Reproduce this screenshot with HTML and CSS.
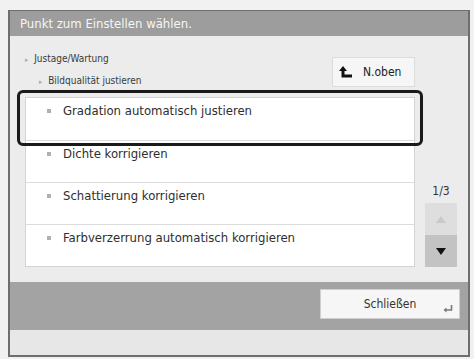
FILE: index.html
```html
<!DOCTYPE html>
<html>

<head>
  <meta charset="utf-8" />
  <title>Punkt zum Einstellen</title>
  <link rel="stylesheet" href="styles.css">
</head>

<body>
  <div class="frame">
    <div class="title">Punkt zum Einstellen wählen.</div>

    <div class="content">
      <div class="head">
        <div class="crumbs">
          <div class="crumb"><span class="tri">▸</span>Justage/Wartung</div>
          <div class="crumb sub"><span class="tri">▸</span>Bildqualität justieren</div>
        </div>
        <div class="btn up-btn">
          <svg width="14" height="13" viewBox="0 0 14 13">
            <path d="M4 0 L0 5 H2.5 V11.5 H13 V8.5 H5.5 V5 H8 Z" fill="#111" />
          </svg>
          <span>N.oben</span>
        </div>
      </div>

      <div class="main">
        <div class="list">
          <div class="row selected"><span class="dot"></span>Gradation automatisch justieren</div>
          <div class="row"><span class="dot"></span>Dichte korrigieren</div>
          <div class="row"><span class="dot"></span>Schattierung korrigieren</div>
          <div class="row"><span class="dot"></span>Farbverzerrung automatisch korrigieren</div>
        </div>
        <div class="side">
          <div class="page">1/3</div>
          <div class="scroll off">
            <svg width="10" height="7" viewBox="0 0 10 7"><path d="M5 0 L10 7 H0 Z" fill="#c9c9c9" /></svg>
          </div>
          <div class="scroll on">
            <svg width="10" height="7" viewBox="0 0 10 7"><path d="M0 0 H10 L5 7 Z" fill="#111" /></svg>
          </div>
        </div>
      </div>
    </div>

    <div class="foot">
      <div class="btn close-btn">
        <span>Schließen</span>
        <svg class="enter" width="10" height="8" viewBox="0 0 10 8">
          <path d="M8.5 0 V5 H3" stroke="#777" stroke-width="1.6" fill="none" />
          <path d="M0.5 5 L3.5 2.5 V7.5 Z" fill="#777" />
        </svg>
      </div>
    </div>

    <div class="strip"></div>
  </div>
</body>

</html>
```

FILE: styles.css
```css
html {
  width: 100%;
  height: 100%;
}

body {
  margin: 0;
  padding: 10px 4px 0 8px;
  background: #f1f1f1;
  font-family: "DejaVu Sans Condensed", "DejaVu Sans", sans-serif;
  font-stretch: condensed;
  color: #2a2a2a;
}

.frame {
  width: 458px;
  border: 2px solid #6e6e6e;
  border-top-width: 1px;
  display: flex;
  flex-direction: column;
}

.title {
  height: 25px;
  line-height: 25px;
  padding-left: 10px;
  background: #9d9d9d;
  color: #f6f6f6;
  font-size: 13px;
}

.content {
  background: #ececec;
  padding: 0 11px 15px 15px;
}

.head {
  height: 61px;
  display: flex;
  justify-content: space-between;
}

.crumbs {
  padding-top: 14px;
  font-size: 10px;
  color: #3a3a3a;
}

.crumb {
  height: 21px;
  line-height: 18px;
}

.crumb.sub {
  padding-left: 14px;
  padding-top: 1px;
}

.tri {
  color: #aaa;
  font-size: 7px;
  margin-right: 6px;
}

.btn {
  background: #f6f6f6;
  border: 1px solid #dcdcdc;
  box-sizing: border-box;
  display: flex;
  align-items: center;
}

.up-btn {
  margin-top: 21px;
  margin-right: 42px;
  width: 83px;
  height: 30px;
  padding-left: 6px;
  gap: 10px;
  font-size: 12px;
  color: #222;
}

.main {
  display: flex;
  gap: 10px;
}

.list {
  width: 390px;
  background: #fff;
  border: 1px solid #d4d4d4;
  box-sizing: border-box;
}

.row {
  position: relative;
  height: 42px;
  padding: 5px 0 0 20px;
  box-sizing: border-box;
  border-top: 1px solid #dcdcdc;
  font-size: 13px;
  line-height: 16px;
  color: #2e2e2e;
  display: flex;
  align-items: flex-start;
}

.row:first-child {
  border-top: none;
}

.row.selected {
  padding-top: 5px;
}

.row.selected::after {
  content: "";
  position: absolute;
  left: -9px;
  right: -9px;
  top: -8px;
  bottom: -6px;
  border: 3px solid #1a1a1a;
  border-radius: 6px;
  z-index: 1;
}

.dot {
  width: 4px;
  height: 4px;
  background: #b0b0b0;
  margin: 6px 12px 0 1px;
}

.side {
  width: 32px;
  display: flex;
  flex-direction: column;
  justify-content: flex-end;
  align-items: center;
}

.page {
  font-size: 12px;
  color: #333;
  margin-bottom: 5px;
}

.scroll {
  width: 32px;
  height: 32px;
  display: flex;
  align-items: center;
  justify-content: center;
}

.scroll.off {
  background: #dedede;
}

.scroll.on {
  background: #c3c3c3;
}

.foot {
  height: 48px;
  background: #a3a3a3;
  display: flex;
  justify-content: flex-end;
  padding: 7px 8px 0 0;
  box-sizing: border-box;
}

.close-btn {
  position: relative;
  width: 140px;
  height: 30px;
  justify-content: center;
  font-size: 12px;
  color: #333;
  border-color: #cfcfcf;
}

.close-btn .enter {
  position: absolute;
  right: 6px;
  bottom: 5px;
}

.strip {
  height: 25px;
  background: #e7e7e7;
}
```
